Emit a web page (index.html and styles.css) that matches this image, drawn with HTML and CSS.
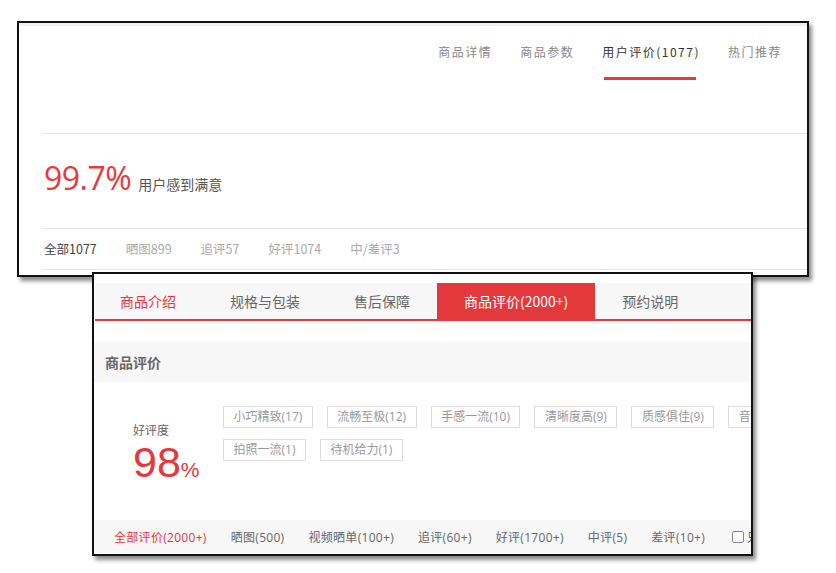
FILE: index.html
```html
<!DOCTYPE html>
<html lang="zh-CN">
<head>
  <meta charset="UTF-8">
  <title>商品评价</title>
  <link rel="stylesheet" href="styles.css">
</head>
<body>
  <div class="canvas">
    <!-- first screenshot: review summary -->
    <div class="shot shot-top">
      <div class="nav">
        <a href="#">商品详情</a>
        <a href="#">商品参数</a>
        <a href="#" class="active">用户评价(1077)</a>
        <a href="#">热门推荐</a>
      </div>
      <div class="rule rule-head"></div>
      <div class="summary">
        <span class="percent">99.7%</span>
        <span class="summary-text">用户感到满意</span>
      </div>
      <div class="rule"></div>
      <div class="filters">
        <a href="#" class="current">全部1077</a>
        <a href="#">晒图899</a>
        <a href="#">追评57</a>
        <a href="#">好评1074</a>
        <a href="#">中/差评3</a>
      </div>
      <div class="rule"></div>
    </div>

    <!-- second screenshot: product tabs -->
    <div class="shot shot-bottom">
      <div class="tabs">
        <a href="#" class="tab first">商品介绍</a>
        <a href="#" class="tab">规格与包装</a>
        <a href="#" class="tab">售后保障</a>
        <a href="#" class="tab active">商品评价(2000+)</a>
        <a href="#" class="tab">预约说明</a>
      </div>
      <div class="panel-head">商品评价</div>
      <div class="rate-body">
        <div class="rate-score">
          <div class="rate-label">好评度</div>
          <div class="rate-num">98<span>%</span></div>
        </div>
        <div class="tags">
          <span class="tag">小巧精致(17)</span>
          <span class="tag">流畅至极(12)</span>
          <span class="tag">手感一流(10)</span>
          <span class="tag">清晰度高(9)</span>
          <span class="tag">质感俱佳(9)</span>
          <span class="tag">音质好(8)</span>
          <span class="tag">拍照一流(1)</span>
          <span class="tag">待机给力(1)</span>
        </div>
      </div>
      <div class="rate-filter">
        <a href="#" class="current">全部评价(2000+)</a>
        <a href="#">晒图(500)</a>
        <a href="#">视频晒单(100+)</a>
        <a href="#">追评(60+)</a>
        <a href="#">好评(1700+)</a>
        <a href="#">中评(5)</a>
        <a href="#">差评(10+)</a>
        <label class="only"><span class="box"></span>只看当前商品评价</label>
      </div>
    </div>
  </div>
</body>
</html>
```

FILE: styles.css
```css
* {
  margin: 0;
  padding: 0;
  box-sizing: border-box;
}

body {
  background: #fff;
  font-family: "Noto Sans CJK SC", "Noto Sans", sans-serif;
}

a {
  text-decoration: none;
}

.canvas {
  position: relative;
  width: 836px;
  height: 573px;
  overflow: hidden;
}

.shot {
  position: absolute;
  background: #fff;
  border: 2px solid #111;
  box-shadow: 3px 4px 4px rgba(0, 0, 0, 0.45);
  overflow: hidden;
}

/* ---------- top screenshot ---------- */

.shot-top {
  left: 17px;
  top: 21px;
  width: 792px;
  height: 256px;
}

.shot-top::before {
  content: "";
  display: block;
  height: 3px;
  background: #f0f0f0;
}

.nav {
  display: flex;
  justify-content: flex-end;
  gap: 28px;
  padding: 16px 25px 0 0;
  height: 57px;
}

.nav a {
  position: relative;
  font-size: 12px;
  letter-spacing: 1.5px;
  line-height: 20px;
  color: #888;
}

.nav a.active {
  color: #333;
}

.nav a.active::after {
  content: "";
  position: absolute;
  left: 2px;
  right: 4px;
  top: 35px;
  height: 3px;
  background: #e8393c;
}

.rule {
  height: 1px;
  margin-left: 24px;
  background: #e6e6e6;
}

.rule-head {
  margin-top: 50px;
}

.summary {
  display: flex;
  align-items: baseline;
  gap: 7px;
  height: 94px;
  padding: 22px 0 0 25px;
}

.percent {
  font-family: "Open Sans", sans-serif;
  font-size: 32px;
  letter-spacing: -0.5px;
  color: #e8393c;
}

.summary-text {
  font-size: 14px;
  color: #555;
}

.filters {
  display: flex;
  align-items: center;
  gap: 29px;
  height: 40px;
  padding: 0 0 2px 25px;
}

.filters a {
  font-size: 12.5px;
  color: #aaa;
}

.filters a.current {
  color: #444;
}

/* ---------- bottom screenshot ---------- */

.shot-bottom {
  left: 92px;
  top: 272px;
  width: 661px;
  height: 284px;
  padding-top: 9px;
}

.tabs {
  display: flex;
  height: 38px;
  margin-left: 1px;
  background: #f7f7f7;
  border-bottom: 2px solid #e4393c;
}

.tab {
  padding: 0 27px;
  line-height: 36px;
  font-size: 14px;
  color: #666;
  white-space: nowrap;
}

.tab.first {
  padding-left: 25px;
  color: #e4393c;
}

.tab.active {
  background: #e4393c;
  color: #fff;
}

.panel-head {
  height: 40px;
  margin-top: 21px;
  padding-left: 11px;
  background: #f7f7f7;
  line-height: 40px;
  font-size: 14px;
  font-weight: bold;
  color: #666;
}

.rate-body {
  display: flex;
  height: 138px;
  padding-top: 24px;
}

.rate-score {
  flex: none;
  width: 129px;
  padding: 16px 0 0 39px;
}

.rate-label {
  font-size: 12px;
  line-height: 16px;
  color: #666;
}

.rate-num {
  margin-top: 2px;
  font-family: "Liberation Sans", Arial, sans-serif;
  font-size: 43px;
  line-height: 44px;
  color: #e4393c;
}

.rate-num span {
  font-size: 21px;
}

.tags {
  display: flex;
  flex-wrap: wrap;
  align-content: flex-start;
  gap: 11px 14px;
  flex: none;
  width: 600px;
}

.tag {
  height: 22px;
  padding: 0 9.5px;
  border: 1px solid #dedede;
  line-height: 20px;
  font-family: "Open Sans", "Noto Sans CJK SC", sans-serif;
  font-size: 12px;
  color: #999;
  white-space: nowrap;
}

.rate-filter {
  display: flex;
  align-items: center;
  gap: 24px;
  height: 33px;
  padding-left: 20px;
  background: #f7f7f7;
  font-family: "Open Sans", "Noto Sans CJK SC", sans-serif;
  white-space: nowrap;
}

.rate-filter a {
  font-size: 12px;
  letter-spacing: 0.3px;
  color: #666;
}

.rate-filter a.current {
  color: #e4393c;
}

.only {
  display: flex;
  align-items: center;
  gap: 3px;
  margin-left: 3px;
  font-size: 12px;
  color: #666;
}

.box {
  width: 12px;
  height: 12px;
  border: 1px solid #888;
  border-radius: 2px;
  background: #fff;
}
```
